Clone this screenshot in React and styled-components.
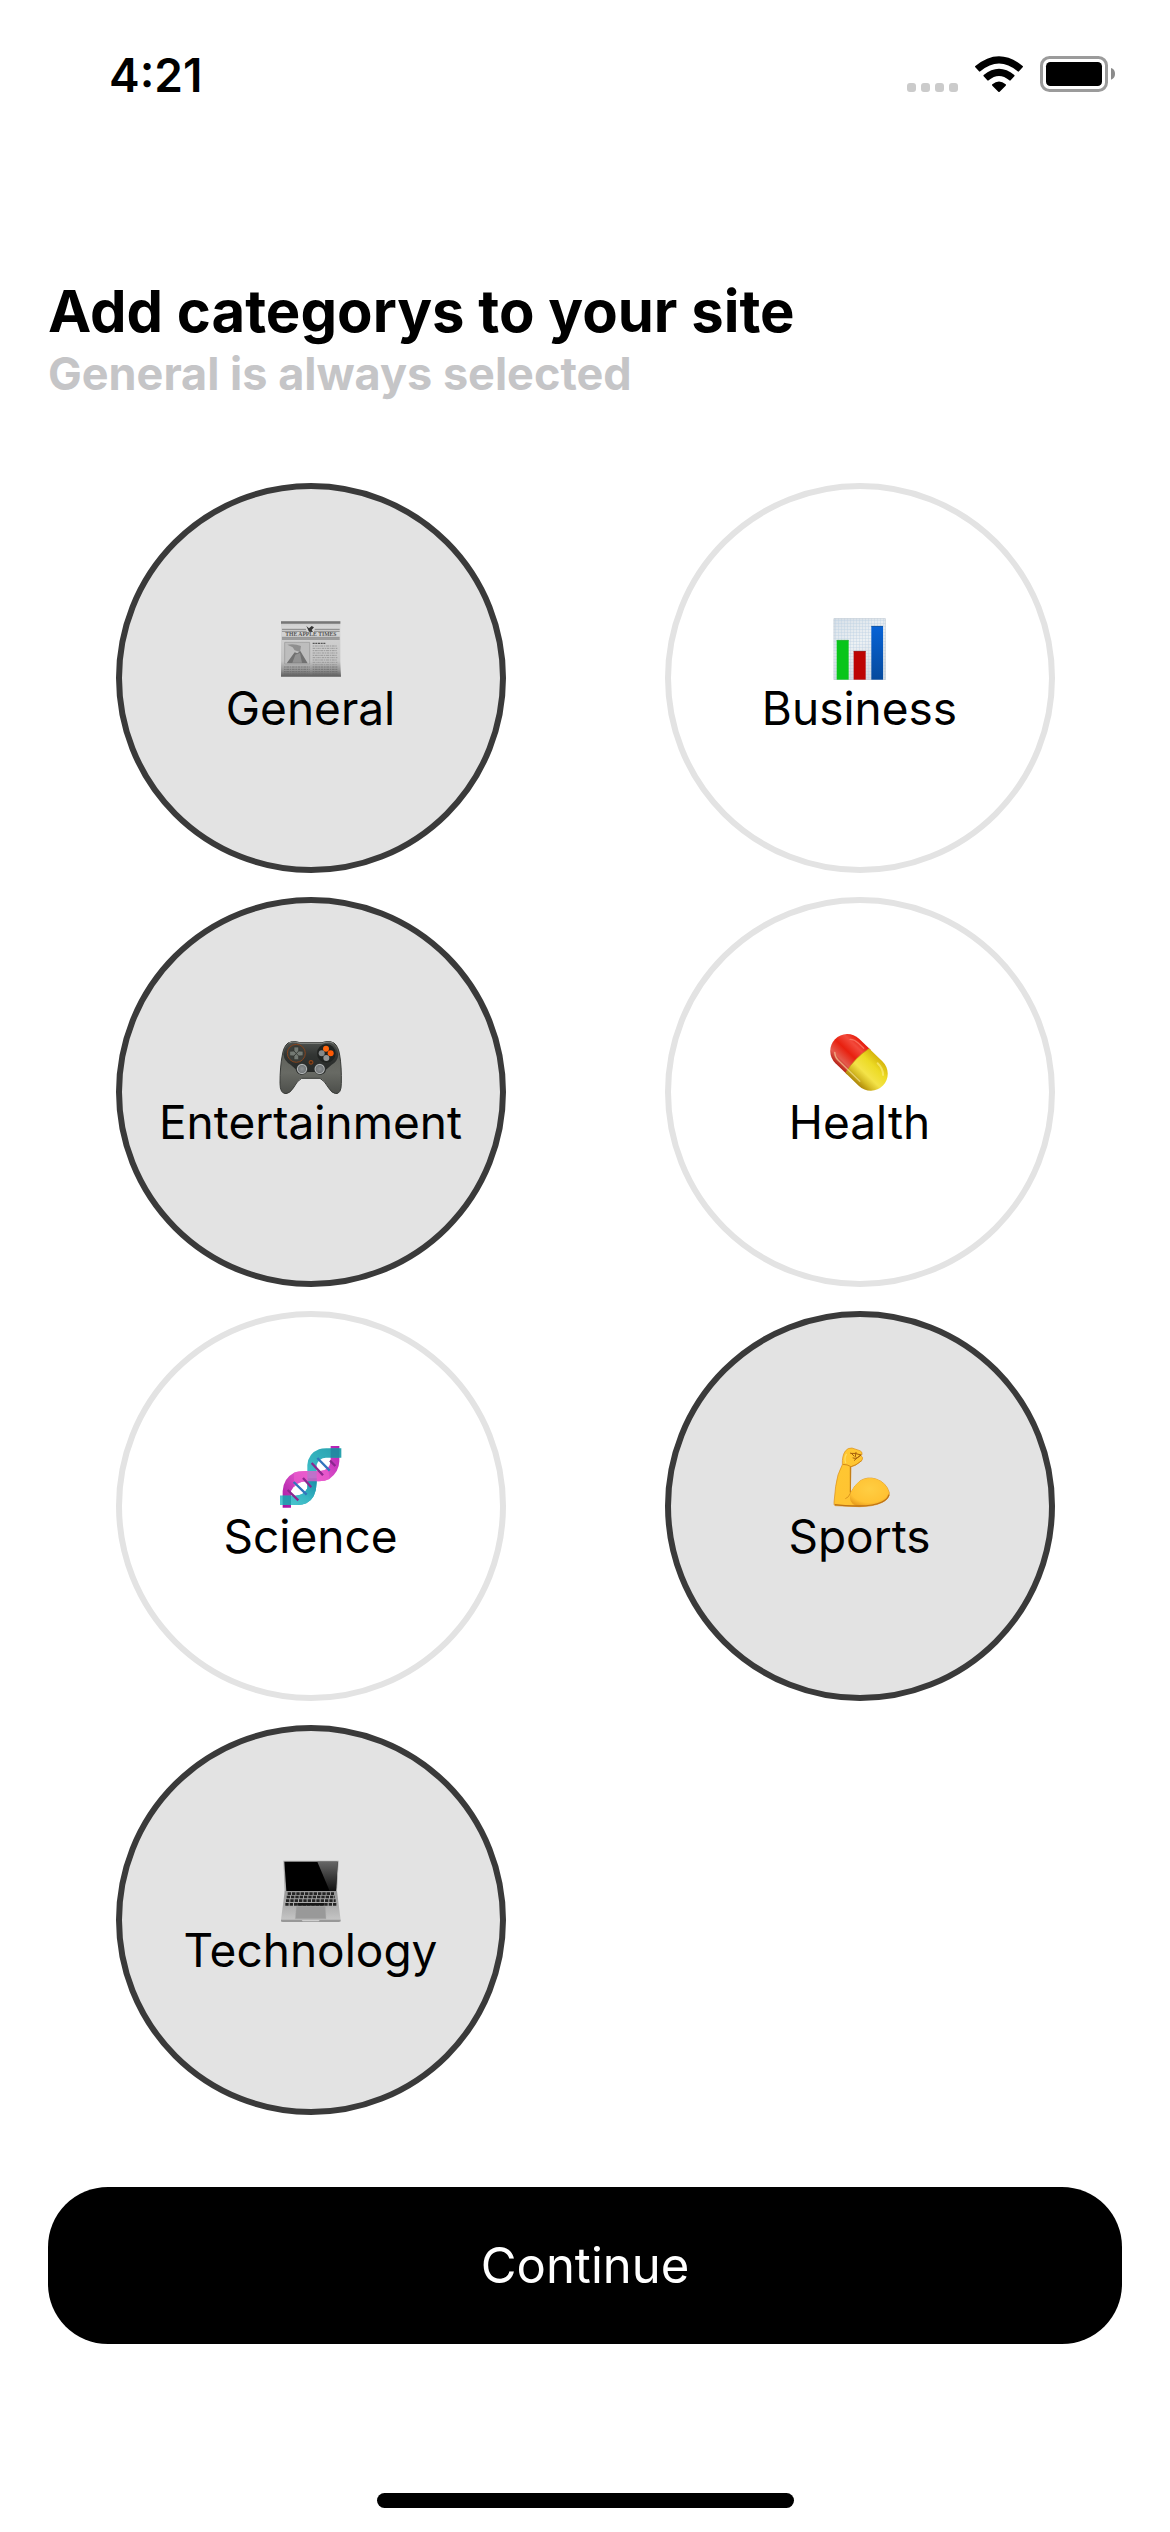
import React, { useState } from "react";
import styled, { createGlobalStyle } from "styled-components";

const GlobalStyle = createGlobalStyle`
  *, *::before, *::after { box-sizing: border-box; }
  body {
    margin: 0;
    background: #ffffff;
    color: #000000;
    font-family: Inter, "Liberation Sans", sans-serif;
  }
  button { font-family: inherit; color: inherit; cursor: pointer; }
`;

const Screen = styled.div`
  display: flex;
  flex-direction: column;
  min-height: 100vh;
`;

const StatusBar = styled.header`
  display: flex;
  align-items: flex-end;
  justify-content: space-between;
  padding: 47px 55px 0 109px;
`;

const Time = styled.time`
  font-size: 46px;
  line-height: 56px;
  font-weight: 600;
`;

const StatusIcons = styled.div`
  display: flex;
  align-items: flex-end;
  gap: 17px;
  padding-bottom: 11px;

  svg { display: block; }
`;

const Content = styled.main`
  display: flex;
  flex-direction: column;
  padding: 172px 48px 0;
`;

const Title = styled.h1`
  margin: 0;
  font-size: 58px;
  line-height: 72px;
  font-weight: 700;
`;

const Subtitle = styled.p`
  margin: 0;
  font-size: 45px;
  line-height: 54px;
  font-weight: 700;
  color: #c5c5c7;
`;

const CategoryGrid = styled.section`
  display: grid;
  grid-template-columns: repeat(2, 1fr);
  gap: 24px;
  justify-items: center;
  padding: 82px 0 72px;
`;

const Category = styled.button`
  display: flex;
  flex-direction: column;
  align-items: center;
  justify-content: center;
  width: 390px;
  height: 390px;
  padding: 0 0 4px;
  border: 6px solid ${(p) => (p.$selected ? "#3a3a3a" : "#e3e3e3")};
  border-radius: 50%;
  background: ${(p) => (p.$selected ? "#e3e3e3" : "#ffffff")};

  svg { display: block; }
`;

const CategoryName = styled.span`
  font-size: 46px;
  line-height: 56px;
`;

const ContinueButton = styled.button`
  width: 100%;
  padding: 48px;
  border: 0;
  border-radius: 60px;
  background: #000000;
  color: #ffffff;
  font-size: 49px;
  line-height: 61px;
`;

const HomeIndicator = styled.div`
  width: 417px;
  height: 15px;
  margin: auto auto 24px;
  border-radius: 8px;
  background: #000000;
`;

const Emoji = ({ box, children }) => (
  <svg width="64" height="64" viewBox={box} aria-hidden="true">
    {children}
  </svg>
);

const range = (n) => Array.from({ length: n }, (_, i) => i);

const Newspaper = () => (
  <Emoji box="205 48 192 192">
    <defs>
      <linearGradient id="paper" x1="0" y1="0" x2="0" y2="1">
        <stop offset="0" stopColor="#c9c9c9" />
        <stop offset="0.1" stopColor="#d6d6d6" />
        <stop offset="0.72" stopColor="#c4c4c4" />
        <stop offset="0.88" stopColor="#959595" />
        <stop offset="1" stopColor="#5c5c5c" />
      </linearGradient>
    </defs>
    <path d="M211 64H389V185L391 230H211Z" fill="url(#paper)" />
    <path d="M211 64H389V71H211Z" fill="#777" />
    <path d="M214 88H286M312 88H387" stroke="#858585" strokeWidth="3" />
    <path d="M214 94H288M310 94H387M214 112H387" stroke="#8d8d8d" strokeWidth="3" />
    <path d="M214 117H387" stroke="#686868" strokeWidth="3" />
    <path d="M287 78L295 85L303 78L310 82L303 90L307 96L295 95Z" fill="#353535" />
    <text x="300.5" y="109" textAnchor="middle" fontFamily="Liberation Serif, serif" fontSize="17" fontWeight="700" fill="#555">
      THE APPLE TIMES
    </text>
    <path d="M222 127H297V192H222Z" fill="#bdbdbd" stroke="#969696" strokeWidth="2" />
    <path d="M230 134Q251 130 271 138L268 156L252 151L246 142Z" fill="#8f8f8f" />
    <path d="M228 190L252 157L260 160L269 153L291 190Z" fill="#717171" />
    <path d="M254 164L268 159L274 188H245Z" fill="#929292" />
    <path d="M306 130H345" stroke="#555" strokeWidth="4" strokeDasharray="6 2" />
    {range(9).map((i) => (
      <path key={i} d={`M306 ${138 + i * 7}H380`} stroke="#999" strokeWidth="3" strokeDasharray={i % 2 ? "7 2 3 2" : "4 2 9 2"} />
    ))}
    {range(4).map((i) => (
      <path key={i} d={`M220 ${201 + i * 7}H297M306 ${201 + i * 7}H382`} stroke="#666" strokeWidth="3" strokeDasharray="5 2 8 2" opacity="0.7" />
    ))}
  </Emoji>
);

const BarChart = () => (
  <Emoji box="202 48 192 192">
    <defs>
      <linearGradient id="sheet" x1="0" y1="0" x2="0.4" y2="1">
        <stop offset="0" stopColor="#d7e0e8" />
        <stop offset="0.5" stopColor="#edf1f4" />
        <stop offset="1" stopColor="#d5dce3" />
      </linearGradient>
      <linearGradient id="blueBar" x1="0" y1="0" x2="0" y2="1">
        <stop offset="0" stopColor="#0863d6" />
        <stop offset="1" stopColor="#064a9d" />
      </linearGradient>
    </defs>
    <path d="M219 55H375V240H219Z" fill="url(#sheet)" />
    {range(17).map((i) => (
      <path key={i} d={`M${224 + i * 9} 55V240`} stroke="#bdd2e4" strokeWidth="2" opacity="0.7" />
    ))}
    {range(20).map((i) => (
      <path key={i} d={`M219 ${61 + i * 9}H375`} stroke="#bdd2e4" strokeWidth="2" opacity="0.7" />
    ))}
    <path d="M220 56H374V239H220Z" fill="none" stroke="#c3ccd4" strokeWidth="2" />
    <path d="M228 120H264V239H228Z" fill="#08c51a" />
    <path d="M279 153H315V239H279Z" fill="#bd0303" />
    <path d="M332 78H367V239H332Z" fill="url(#blueBar)" />
    <path d="M228 121H264" stroke="#48a951" strokeWidth="2" />
    <path d="M279 154H315" stroke="#8d2c2c" strokeWidth="2" />
    <path d="M332 79H367" stroke="#174e8b" strokeWidth="2" />
  </Emoji>
);

const Gamepad = () => (
  <Emoji box="205 45 192 192">
    <defs>
      <linearGradient id="grip" x1="0" y1="0" x2="0" y2="1">
        <stop offset="0" stopColor="#5b5c56" />
        <stop offset="0.6" stopColor="#686a64" />
        <stop offset="1" stopColor="#4c4e4a" />
      </linearGradient>
      <linearGradient id="padFace" x1="0" y1="0" x2="0" y2="1">
        <stop offset="0" stopColor="#4d504d" />
        <stop offset="0.4" stopColor="#323533" />
        <stop offset="1" stopColor="#242625" />
      </linearGradient>
      <radialGradient id="stick">
        <stop offset="0" stopColor="#8d9193" />
        <stop offset="0.65" stopColor="#74787a" />
        <stop offset="0.8" stopColor="#b1b4b5" />
        <stop offset="1" stopColor="#303332" />
      </radialGradient>
    </defs>
    <path
      d="M232 84Q246 77 257 80L267 83H334L345 80Q358 77 370 84Q383 94 387 120Q393 155 392 205Q392 237 375 236Q363 234 354 219Q341 196 328 190H273Q260 196 248 219Q238 235 226 236Q208 236 208 205Q208 155 215 120Q219 94 232 84Z"
      fill="url(#grip)"
      stroke="#383a37"
      strokeWidth="3"
    />
    <path
      d="M238 84Q253 77 267 85H334Q350 77 363 84Q380 96 383 119Q381 139 363 149L346 164Q344 178 328 179L313 171H289L273 179Q257 178 255 163L240 149Q221 140 218 118Q222 95 238 84Z"
      fill="url(#padFace)"
    />
    <path d="M234 84Q246 79 257 82L267 85H334L345 82Q358 79 369 85" fill="none" stroke="#858884" strokeWidth="3" />
    <circle cx="257" cy="115" r="27" fill="#3b3e3a" stroke="#85431d" strokeWidth="3" />
    <path d="M250 96H264V108L277 109V122L264 123V134H250V123L237 122V109L250 108Z" fill="#747a74" stroke="#30342f" strokeWidth="2" />
    <path d="M250 108L264 123M264 108L250 123" stroke="#3a3e39" strokeWidth="3" />
    <circle cx="347" cy="115" r="28" fill="#202321" />
    <circle cx="346" cy="101" r="9" fill="#ff650c" />
    <circle cx="360" cy="115" r="9" fill="#ff5a05" />
    <circle cx="333" cy="115" r="9" fill="#858889" />
    <circle cx="347" cy="129" r="9" fill="#929495" />
    <circle cx="301" cy="142" r="6" fill="#663719" stroke="#aa4b16" strokeWidth="2" />
    <circle cx="301" cy="142" r="2" fill="#271b12" />
    <circle cx="274" cy="162" r="17" fill="url(#stick)" />
    <circle cx="327" cy="162" r="17" fill="url(#stick)" />
  </Emoji>
);

const Pill = () => (
  <Emoji box="202 45 192 192">
    <defs>
      <linearGradient id="redHalf" x1="0" y1="0" x2="0" y2="1">
        <stop offset="0" stopColor="#e61b0b" />
        <stop offset="0.22" stopColor="#f24a3c" />
        <stop offset="0.5" stopColor="#e8200f" />
        <stop offset="0.8" stopColor="#e45a4c" />
        <stop offset="1" stopColor="#b52216" />
      </linearGradient>
      <linearGradient id="yellowHalf" x1="0" y1="0" x2="0" y2="1">
        <stop offset="0" stopColor="#d6b50b" />
        <stop offset="0.28" stopColor="#eddb25" />
        <stop offset="0.6" stopColor="#f4e348" />
        <stop offset="0.8" stopColor="#d7bd25" />
        <stop offset="1" stopColor="#ae8708" />
      </linearGradient>
    </defs>
    <g transform="rotate(44 295 142)">
      <path d="M295 91H246A51 51 0 0 0 246 193H295Z" fill="url(#redHalf)" />
      <path d="M288 91H344A51 51 0 0 1 344 193H288Q276 142 288 91Z" fill="url(#yellowHalf)" />
      <path d="M288 91Q276 142 288 193" fill="none" stroke="#c28b17" strokeWidth="2" />
      <path d="M222 171Q232 181 246 181H336" fill="none" stroke="#fff0b0" strokeWidth="4" strokeLinecap="round" opacity="0.55" />
      <path d="M228 111Q237 102 253 102H276" fill="none" stroke="#ff8a77" strokeWidth="4" strokeLinecap="round" opacity="0.65" />
      <path d="M337 105Q360 105 373 119" fill="none" stroke="#fff18a" strokeWidth="6" strokeLinecap="round" opacity="0.6" />
    </g>
  </Emoji>
);

const Dna = () => (
  <Emoji box="205 42 192 192">
    <defs>
      <linearGradient id="tealTop" x1="0" y1="1" x2="1" y2="0">
        <stop offset="0" stopColor="#1793a8" />
        <stop offset="0.5" stopColor="#3ebec9" />
        <stop offset="1" stopColor="#27a0ac" />
      </linearGradient>
      <linearGradient id="tealBottom" x1="0" y1="1" x2="1" y2="0">
        <stop offset="0" stopColor="#52cbd2" />
        <stop offset="0.5" stopColor="#38b6c3" />
        <stop offset="1" stopColor="#168ba6" />
      </linearGradient>
      <linearGradient id="pinkBand" x1="0" y1="1" x2="1" y2="0">
        <stop offset="0" stopColor="#a312a2" />
        <stop offset="0.5" stopColor="#eb62d1" />
        <stop offset="1" stopColor="#b31eb3" />
      </linearGradient>
    </defs>
    <path
      d="M360 48H386V94Q385 127 356 147Q344 154 325 154H286Q256 155 241 183V233H216V183Q218 145 250 128Q262 123 284 123H329Q358 122 360 89Z"
      fill="url(#pinkBand)"
    />
    <path
      d="M392 55V83H346Q325 84 318 104V158Q317 204 287 220Q276 225 260 225H208V197H255Q279 197 290 175V105Q293 70 325 58Q333 55 347 55Z"
      fill="url(#tealTop)"
    />
    <path d="M292 145H318V158Q317 204 287 220Q276 225 260 225H208V197H255Q279 197 290 175Z" fill="url(#tealBottom)" />
    <path d="M250 128Q262 123 284 123H329Q345 122 353 112L356 147Q344 154 325 154H286Q263 154 250 172Z" fill="#e95acb" opacity="0.75" />
    <path d="M360 55H386V83H360Z" fill="#217f9d" opacity="0.75" />
    <path d="M216 197H241V225H216Z" fill="#188aa2" opacity="0.7" />
    <path d="M320 84L357 122M249 156L288 194" stroke="#3274bd" strokeWidth="7" />
    <path d="M303 99L337 136M231 180L263 211M277 144L302 172M358 92L374 108" stroke="#8c268f" strokeWidth="7" />
  </Emoji>
);

const Biceps = () => (
  <Emoji box="202 42 192 192">
    <defs>
      <linearGradient id="skin" x1="0" y1="0" x2="1" y2="1">
        <stop offset="0" stopColor="#ffc931" />
        <stop offset="0.6" stopColor="#ffc332" />
        <stop offset="1" stopColor="#f1a51f" />
      </linearGradient>
      <radialGradient id="muscle" cx="0.5" cy="0.4" r="0.65">
        <stop offset="0" stopColor="#ffce43" />
        <stop offset="0.75" stopColor="#ffc233" />
        <stop offset="1" stopColor="#eaa01f" />
      </radialGradient>
    </defs>
    <path
      d="M254 63Q261 53 274 54L298 62Q306 66 304 73L301 77Q309 82 304 91L294 99Q284 108 271 110L269 190Q281 165 299 152Q321 139 346 147Q377 157 386 188Q387 206 365 217Q339 230 296 230L223 227Q219 225 220 217L225 169Q229 133 245 104Q244 77 254 63Z"
      fill="url(#skin)"
      stroke="#d98d18"
      strokeWidth="2"
    />
    <path d="M269 190Q281 165 299 152Q321 139 346 147Q377 157 385 188Q385 206 364 215Q337 227 286 227Q263 221 269 190Z" fill="url(#muscle)" />
    <path d="M269 110V187" stroke="#bd7612" strokeWidth="3" />
    <path d="M222 224Q248 228 296 228Q339 228 364 216Q381 208 385 194" fill="none" stroke="#bd7217" strokeWidth="4" />
    <path d="M246 103Q260 103 271 110Q285 107 303 92" fill="none" stroke="#d48b17" strokeWidth="3" />
    <path
      d="M270 70Q282 68 301 75L290 83Q283 87 277 84M271 69L280 78M286 67L284 80M301 75Q291 82 281 91"
      fill="none"
      stroke="#a5600c"
      strokeWidth="3"
      strokeLinecap="round"
    />
    <path d="M257 73Q250 84 255 98" fill="none" stroke="#ffdc61" strokeWidth="4" strokeLinecap="round" />
    <path d="M269 190Q264 203 254 206" fill="none" stroke="#dc951c" strokeWidth="3" />
  </Emoji>
);

const Laptop = () => (
  <Emoji box="205 54 192 192">
    <defs>
      <linearGradient id="glare" x1="0" y1="0" x2="0" y2="1">
        <stop offset="0" stopColor="#666" />
        <stop offset="1" stopColor="#111" />
      </linearGradient>
      <linearGradient id="deck" x1="0" y1="0" x2="0" y2="1">
        <stop offset="0" stopColor="#969696" />
        <stop offset="1" stopColor="#c5c5c5" />
      </linearGradient>
    </defs>
    <path d="M218 62H384L379 156H222Z" fill="#aaa" />
    <path d="M221 65H381L376 153H227Z" fill="#000" />
    <path d="M320 65H381L376 153H357Z" fill="url(#glare)" />
    <path d="M222 154H379L390 240H211Z" fill="url(#deck)" />
    <path d="M231 161H370M228 171H373M226 182H375M224 193H377" stroke="#242424" strokeWidth="8" strokeDasharray="10 3" />
    <path d="M260 193H341" stroke="#171717" strokeWidth="8" />
    <path d="M257 199H344L346 236H254Z" fill="#999" stroke="#aaa" strokeWidth="1" />
    <path d="M211 239H390V244Q389 246 384 246H217Q211 246 211 244Z" fill="#989898" />
    <path d="M273 240H327L324 244H276Z" fill="#cfcfcf" />
  </Emoji>
);

const categories = [
  { name: "General", Icon: Newspaper },
  { name: "Business", Icon: BarChart },
  { name: "Entertainment", Icon: Gamepad },
  { name: "Health", Icon: Pill },
  { name: "Science", Icon: Dna },
  { name: "Sports", Icon: Biceps },
  { name: "Technology", Icon: Laptop },
];

const SignalDots = () => (
  <svg width="51" height="9" viewBox="0 0 51 9" aria-hidden="true">
    {range(4).map((i) => (
      <rect key={i} x={i * 14} width="9" height="9" rx="3" fill="#cbcbcb" />
    ))}
  </svg>
);

const Wifi = () => (
  <svg width="48" height="36" viewBox="285 75 144 108" aria-hidden="true">
    <path d="M286 105Q357 46 428 105Q430 107 428 109L417 121Q415 123 413 121Q357 74 301 121Q299 123 297 121L286 109Q284 107 286 105Z" />
    <path d="M311 132Q357 95 403 132Q405 134 403 136L392 148Q390 150 388 148Q357 122 326 148Q324 150 322 148L311 136Q309 134 311 132Z" />
    <path d="M337 160Q357 143 377 160Q379 162 377 164L359 182Q357 184 355 182L337 164Q335 162 337 160Z" />
  </svg>
);

const Battery = () => (
  <svg width="75" height="36" viewBox="480 78 225 108" aria-hidden="true">
    <rect x="484.5" y="82.5" width="195" height="99" rx="24" fill="none" stroke="#9b9b9b" strokeWidth="9" />
    <rect x="498" y="96" width="168" height="72" rx="13" />
    <path d="M693 114Q705 118 705 131T693 149Z" fill="#8b8b8b" />
  </svg>
);

export default function App() {
  const [selected, setSelected] = useState(["General", "Entertainment", "Sports", "Technology"]);

  const toggle = (name) => {
    if (name === "General") return;
    setSelected((now) => (now.includes(name) ? now.filter((n) => n !== name) : [...now, name]));
  };

  return (
    <Screen>
      <GlobalStyle />
      <StatusBar>
        <Time>4:21</Time>
        <StatusIcons>
          <SignalDots />
          <Wifi />
          <Battery />
        </StatusIcons>
      </StatusBar>
      <Content>
        <Title>Add categorys to your site</Title>
        <Subtitle>General is always selected</Subtitle>
        <CategoryGrid>
          {categories.map(({ name, Icon }) => (
            <Category
              key={name}
              type="button"
              $selected={selected.includes(name)}
              aria-pressed={selected.includes(name)}
              onClick={() => toggle(name)}
            >
              <Icon />
              <CategoryName>{name}</CategoryName>
            </Category>
          ))}
        </CategoryGrid>
        <ContinueButton type="button">Continue</ContinueButton>
      </Content>
      <HomeIndicator />
    </Screen>
  );
}
